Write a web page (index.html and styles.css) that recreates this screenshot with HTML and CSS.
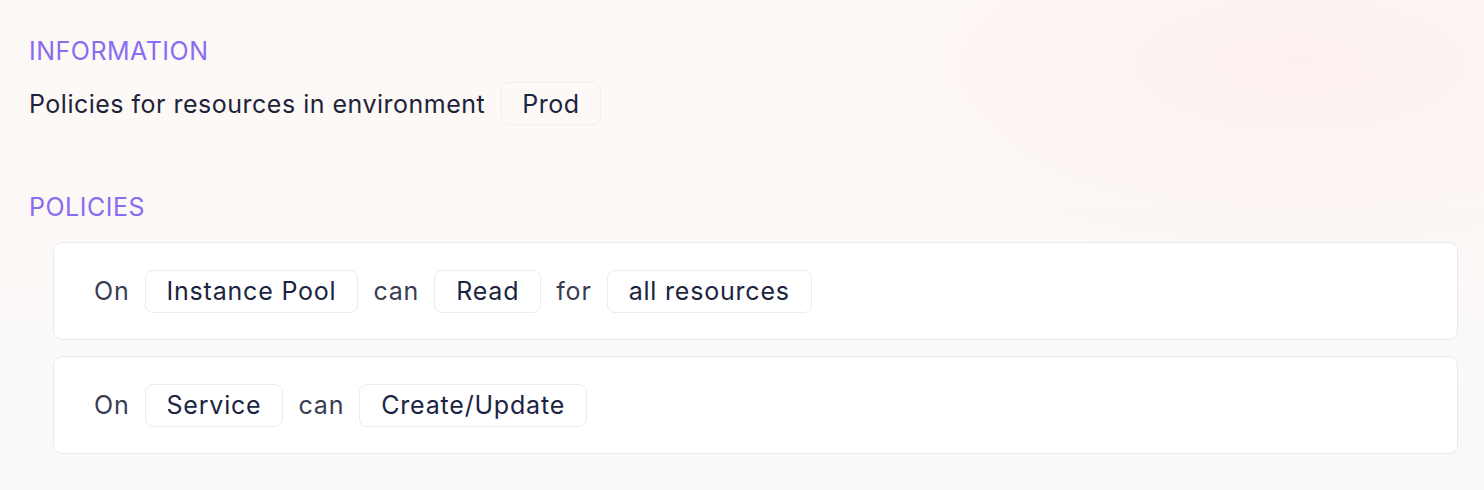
FILE: index.html
```html
<!DOCTYPE html>
<html lang="en">
<head>
<meta charset="utf-8">
<title>Policies</title>
<link rel="stylesheet" href="styles.css">
</head>
<body>
<main class="page">
  <section class="section info">
    <h2 class="label">INFORMATION</h2>
    <p class="line">Policies for resources in environment <span class="chip">Prod</span></p>
  </section>
  <section class="section policies">
    <h2 class="label">POLICIES</h2>
    <ul class="cards">
      <li class="card">
        <span class="word">On</span><span class="chip">Instance Pool</span><span class="word">can</span><span class="chip">Read</span><span class="word">for</span><span class="chip">all resources</span>
      </li>
      <li class="card">
        <span class="word">On</span><span class="chip">Service</span><span class="word">can</span><span class="chip">Create/Update</span>
      </li>
    </ul>
  </section>
</main>
</body>
</html>
```
FILE: styles.css
```css
* { box-sizing: border-box; }
html, body { margin: 0; height: 100%; }
body {
  font-family: Inter, "Noto Sans", sans-serif;
  color: #1f2339;
  background:
    radial-gradient(ellipse 700px 300px at 1300px 60px, rgba(252,238,238,0.8), rgba(252,238,238,0) 70%),
    linear-gradient(180deg, #fdf9f7 0%, #fcf8f6 45%, #f9f9fb 100%);
}
.page {
  padding: 34px 26px 0 29px;
}
.label {
  margin: 0;
  font-size: 25px;
  font-weight: 400;
  color: #8a6cf2;
  line-height: 34px;
  letter-spacing: 0.5px;
}
.line {
  margin: 14px 0 0;
  display: flex;
  align-items: center;
  gap: 16px;
  font-size: 25px;
  letter-spacing: 0.5px;
  color: #1f2339;
}
.section.policies { margin-top: 65px; }
.cards {
  list-style: none;
  margin: 18px 0 0 24px;
  padding: 0;
  display: flex;
  flex-direction: column;
  gap: 16px;
}
.card {
  height: 98px;
  background: #fff;
  border: 1.5px solid #e9e9ee;
  border-radius: 9px;
  display: flex;
  align-items: center;
  gap: 15px;
  padding-left: 40px;
  font-size: 25px;
  letter-spacing: 0.8px;
}
.word { color: #383d52; }
.chip {
  display: inline-flex;
  align-items: center;
  height: 43px;
  padding: 0 21px;
  border: 1.5px solid #ececf0;
  border-radius: 8px;
  background: #fff;
  color: #1b2440;
}
.line .chip {
  background: #fdf9f7;
  border-color: #f3efed;
  height: 43px;
  padding: 0 20px;
}
```
